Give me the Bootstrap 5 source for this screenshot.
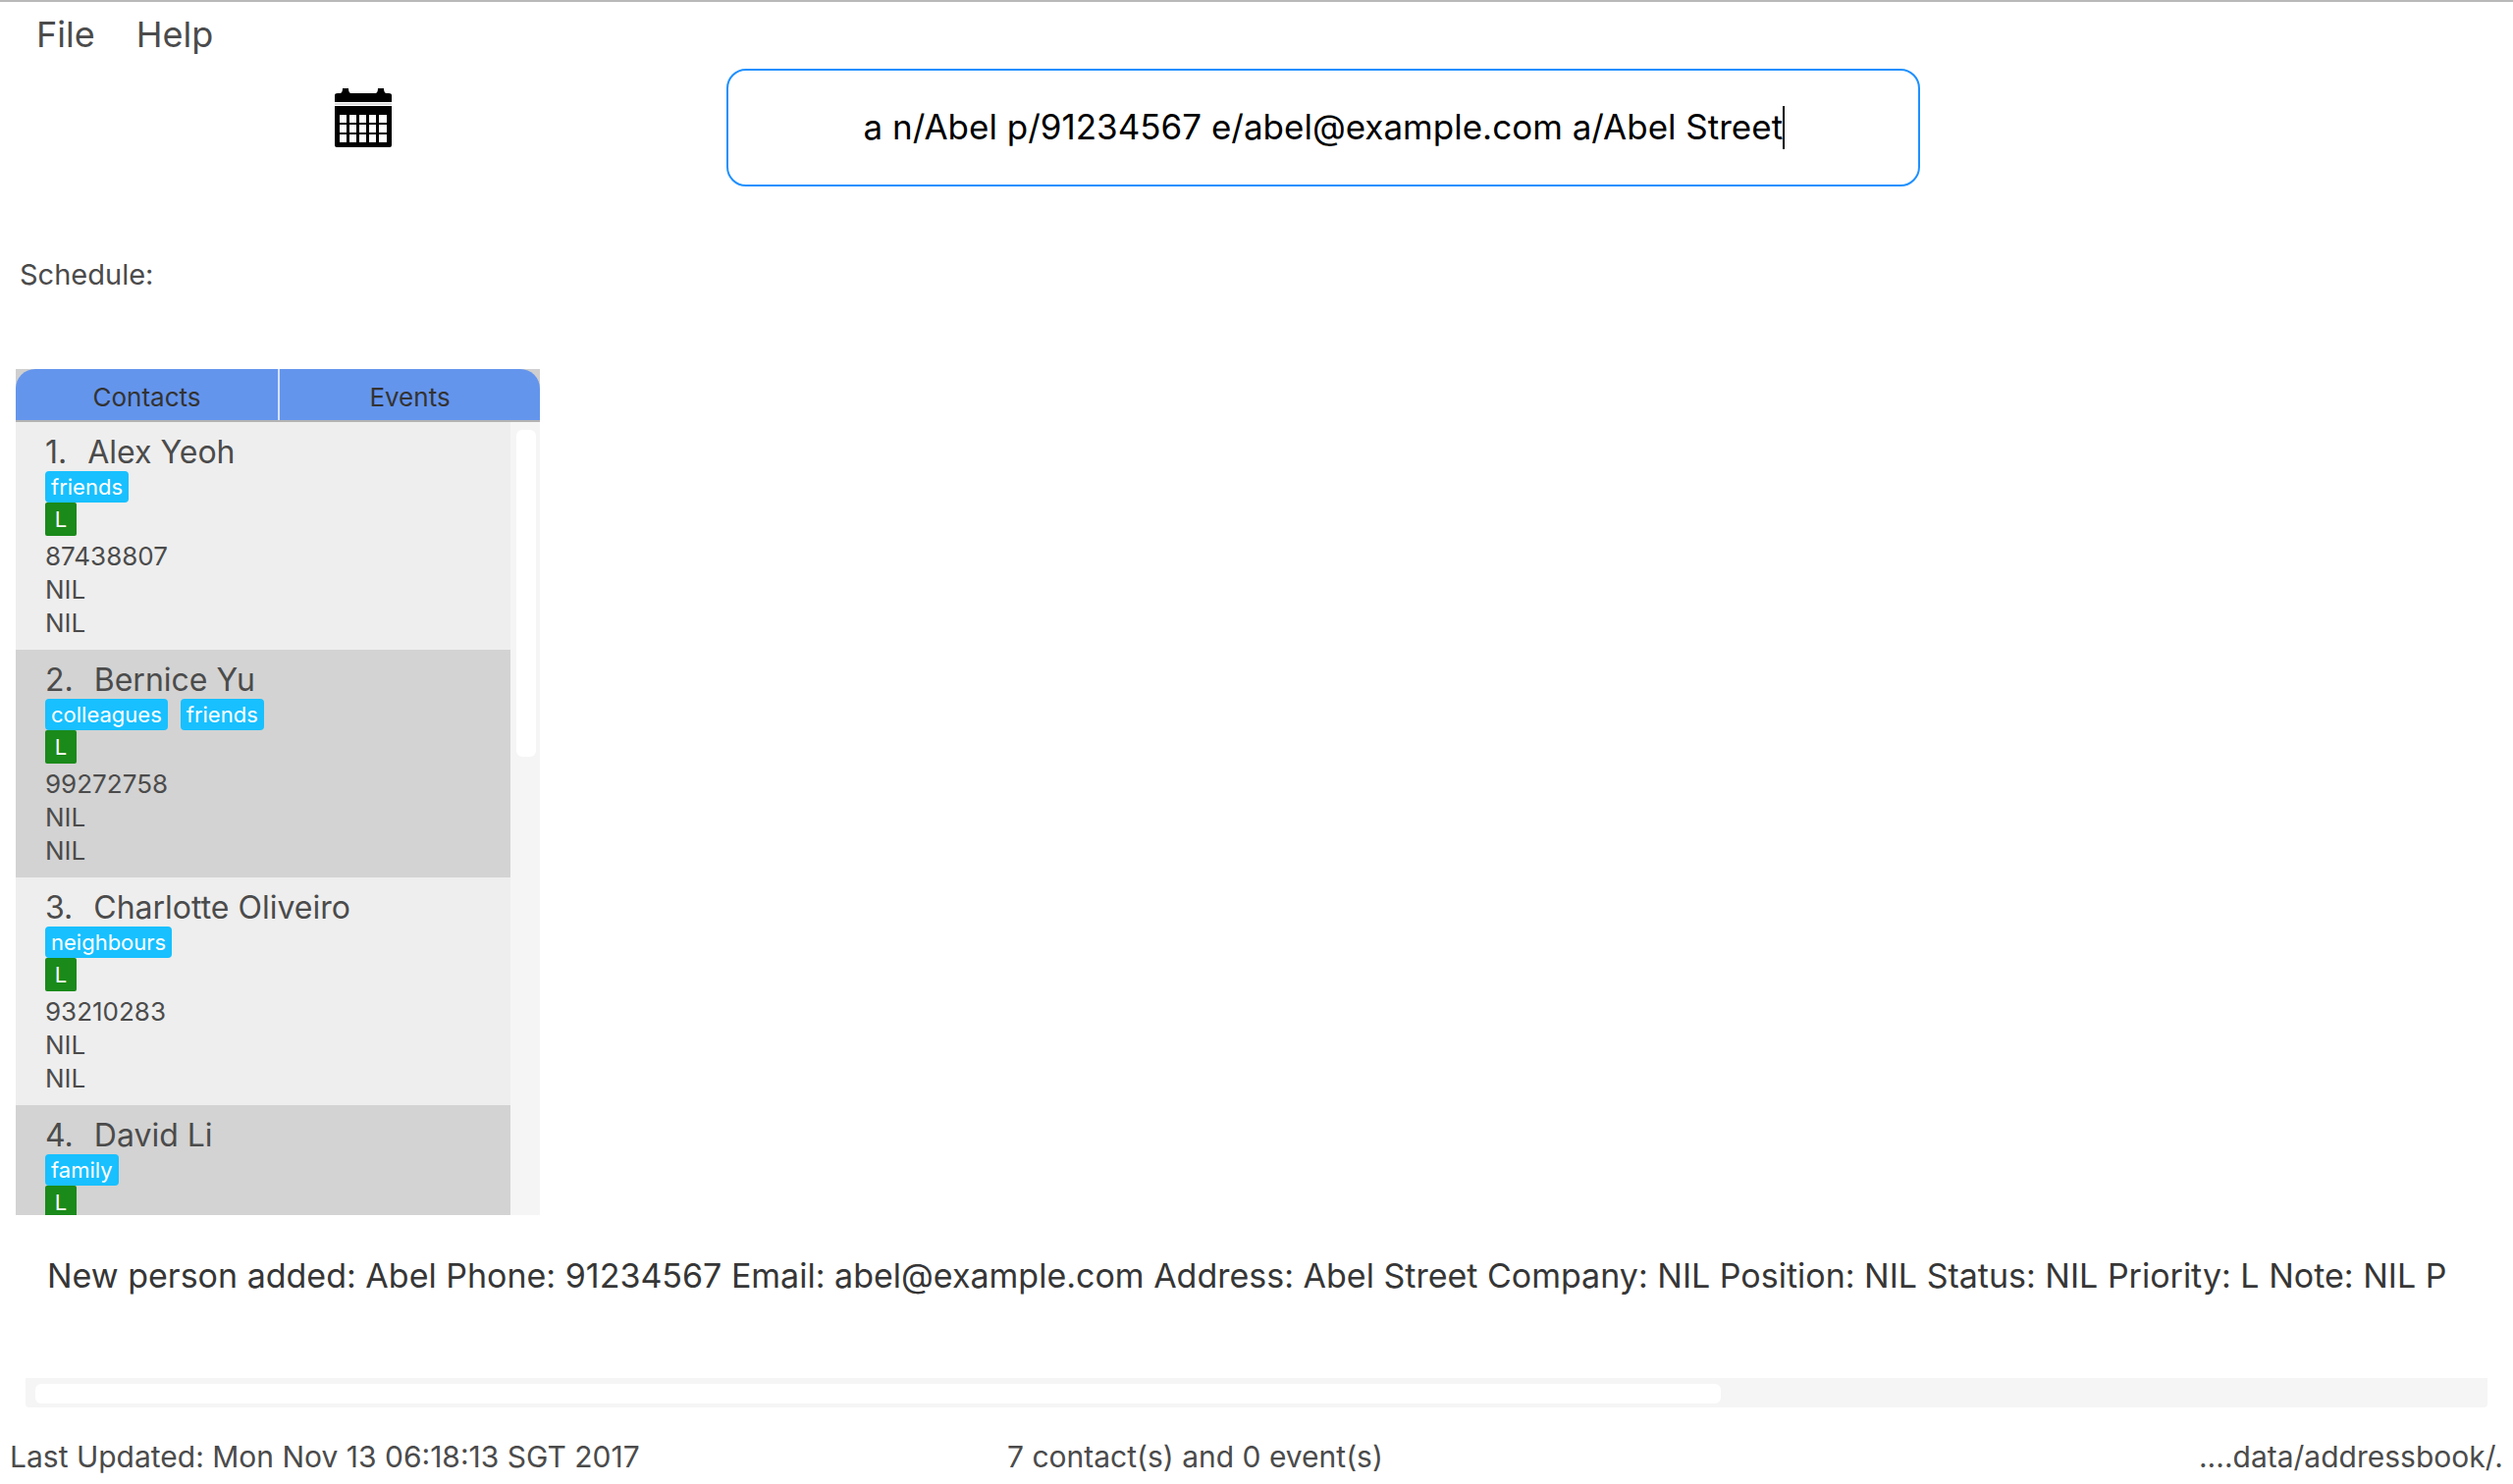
<!DOCTYPE html>
<html lang="en">
<head>
<meta charset="utf-8">
<meta name="viewport" content="width=device-width, initial-scale=1">
<title>Address Book</title>
<link href="https://cdn.jsdelivr.net/npm/bootstrap@5.3.0/dist/css/bootstrap.min.css" rel="stylesheet">
<style>
  body { font-family: Inter, "Liberation Sans", sans-serif; color: #4b4b4b; background: #fff; }
  .app-shell { border-top: 2px solid #b9b9b9; }
  .menu-bar { height: 68px; padding: 0 37px 2px; gap: 42px; }
  .menu-bar .btn { font-size: 36px; line-height: 44px; color: #4b4b4b; }
  .side-area { width: 28.9%; }
  .command-area { width: 47.5%; }
  .command-box { height: 120px; padding: 6px 12px 8px; border: 2px solid #1e90ff; border-radius: 20px; font-size: 35px; color: #000; }
  .command-box:focus { border-color: #1e90ff; box-shadow: none; color: #000; }
  .text-caret { left: calc(50% + 468px); top: 38px; width: 2px; height: 44px; background: #000; }
  .calendar-btn svg { display: block; margin-top: 20px; }
  .schedule-title { font-size: 29px; line-height: 36px; padding: 72px 20px 78px; }
  .list-panel { width: 534px; margin-left: 16px; background: #cfcfcf; }
  .list-tabs { border-bottom: 2px solid #b3b3b3; }
  .list-tabs .nav-link { height: 52px; padding: 4px 0 0; border: 0; font-size: 26px; color: #333; background: #6495ed; border-radius: 0; text-align: center; }
  .list-tabs .nav-item:first-child .nav-link { border-top-left-radius: 20px; }
  .list-tabs .nav-item + .nav-item { border-left: 2px solid #d5e1f8; }
  .list-tabs .nav-item:last-child .nav-link { border-top-right-radius: 20px; }
  .person-row { height: 232px; padding: 12px 30px 0; background: #eee; font-size: 26px; line-height: 34px; }
  .person-row:nth-child(even) { background: #d3d3d3; }
  .person-name { font-size: 32px; line-height: 38px; gap: 21px; }
  .tag-chip { height: 32px; padding: 0 6px; border-radius: 4px; font-size: 22px; line-height: 32px; color: #fff; background: #18c0ff; }
  .tag-list { gap: 13px; }
  .priority-chip { width: 32px; height: 34px; border-radius: 2px; font-size: 22px; line-height: 34px; color: #fff; background: #1a8a1a; margin-bottom: 4px; }
  .bar-track { background: #f5f5f5; }
  .bar-thumb { background: #fff; border-radius: 6px; }
  .v-track { width: 30px; padding: 8px 4px 8px 6px; }
  .v-track .bar-thumb { height: 42%; }
  .result-area { height: 196px; margin: 0 26px; }
  .result-text { padding: 39px 22px 0; font-size: 34px; line-height: 46px; color: #363636; }
  .h-track { height: 30px; padding: 6px 10px 4px; border-radius: 0 0 4px 4px; }
  .h-track .bar-thumb { width: 69%; }
  .status-bar { height: 78px; padding: 32px 10px 0; font-size: 30px; line-height: 36px; }
  .status-updated { width: 40%; }
</style>
</head>
<body>
<div class="app-shell d-flex flex-column vh-100 overflow-hidden">
  <nav class="menu-bar d-flex align-items-center flex-shrink-0" aria-label="Main menu">
    <button type="button" class="btn border-0 p-0">File</button>
    <button type="button" class="btn border-0 p-0">Help</button>
  </nav>

  <div class="d-flex flex-shrink-0">
    <div class="side-area d-flex justify-content-center align-items-start">
      <button type="button" class="calendar-btn btn border-0 p-0" aria-label="Calendar">
        <svg width="58" height="60" viewBox="0 0 58 60">
          <path fill="#000" d="M0 7Q0 5 3 5H6Q8 4 8 0H14Q14 4 16 5H42Q44 4 44 0H50Q50 4 52 5H55Q58 5 58 7V14H0Z"/>
          <path fill="#dcdcdc" d="M0 15H58V17H0Z"/>
          <path fill="#000" fill-rule="evenodd" d="M0 18H58V58Q58 60 56 60H2Q0 60 0 58Z
            M5 27V35H12V27Z M15 27V35H22V27Z M25 27V35H32V27Z M35 27V35H42V27Z M45 27V35H53V27Z
            M5 37V45H12V37Z M15 37V45H22V37Z M25 37V45H32V37Z M35 37V45H42V37Z M45 37V45H53V37Z
            M5 47V55H12V47Z M15 47V55H22V47Z M25 47V55H32V47Z M35 47V55H42V47Z M45 47V55H53V47Z"/>
        </svg>
      </button>
    </div>
    <div class="command-area position-relative">
      <input type="text" class="command-box form-control text-center" aria-label="Command" value="a n/Abel p/91234567 e/abel@example.com a/Abel Street">
      <span class="text-caret position-absolute"></span>
    </div>
  </div>

  <h1 class="schedule-title fw-normal m-0 flex-shrink-0">Schedule:</h1>

  <main class="list-panel d-flex flex-column flex-grow-1 overflow-hidden">
    <ul class="list-tabs nav nav-fill flex-nowrap flex-shrink-0">
      <li class="nav-item w-50"><button type="button" class="nav-link w-100">Contacts</button></li>
      <li class="nav-item w-50"><button type="button" class="nav-link w-100">Events</button></li>
    </ul>
    <div class="d-flex flex-grow-1 overflow-hidden">
      <div class="flex-grow-1 overflow-hidden">
        <article class="person-row">
          <div class="person-name d-flex"><span>1.</span><span>Alex Yeoh</span></div>
          <div class="tag-list d-flex"><span class="tag-chip">friends</span></div>
          <div class="priority-chip text-center">L</div>
          <div>87438807</div><div>NIL</div><div>NIL</div>
        </article>
        <article class="person-row">
          <div class="person-name d-flex"><span>2.</span><span>Bernice Yu</span></div>
          <div class="tag-list d-flex"><span class="tag-chip">colleagues</span><span class="tag-chip">friends</span></div>
          <div class="priority-chip text-center">L</div>
          <div>99272758</div><div>NIL</div><div>NIL</div>
        </article>
        <article class="person-row">
          <div class="person-name d-flex"><span>3.</span><span>Charlotte Oliveiro</span></div>
          <div class="tag-list d-flex"><span class="tag-chip">neighbours</span></div>
          <div class="priority-chip text-center">L</div>
          <div>93210283</div><div>NIL</div><div>NIL</div>
        </article>
        <article class="person-row">
          <div class="person-name d-flex"><span>4.</span><span>David Li</span></div>
          <div class="tag-list d-flex"><span class="tag-chip">family</span></div>
          <div class="priority-chip text-center">L</div>
        </article>
      </div>
      <div class="bar-track v-track flex-shrink-0"><div class="bar-thumb"></div></div>
    </div>
  </main>

  <section class="result-area d-flex flex-column justify-content-between flex-shrink-0">
    <div class="result-text text-nowrap overflow-hidden pe-0">New person added: Abel Phone: 91234567 Email: abel@example.com Address: Abel Street Company: NIL Position: NIL Status: NIL Priority: L Note: NIL P</div>
    <div class="bar-track h-track"><div class="bar-thumb h-100"></div></div>
  </section>

  <footer class="status-bar d-flex flex-shrink-0">
    <span class="status-updated">Last Updated: Mon Nov 13 06:18:13 SGT 2017</span>
    <span class="flex-grow-1">7 contact(s) and 0 event(s)</span>
    <span>....data/addressbook/.</span>
  </footer>
</div>
<script src="https://cdn.jsdelivr.net/npm/bootstrap@5.3.0/dist/js/bootstrap.bundle.min.js"></script>
</body>
</html>
